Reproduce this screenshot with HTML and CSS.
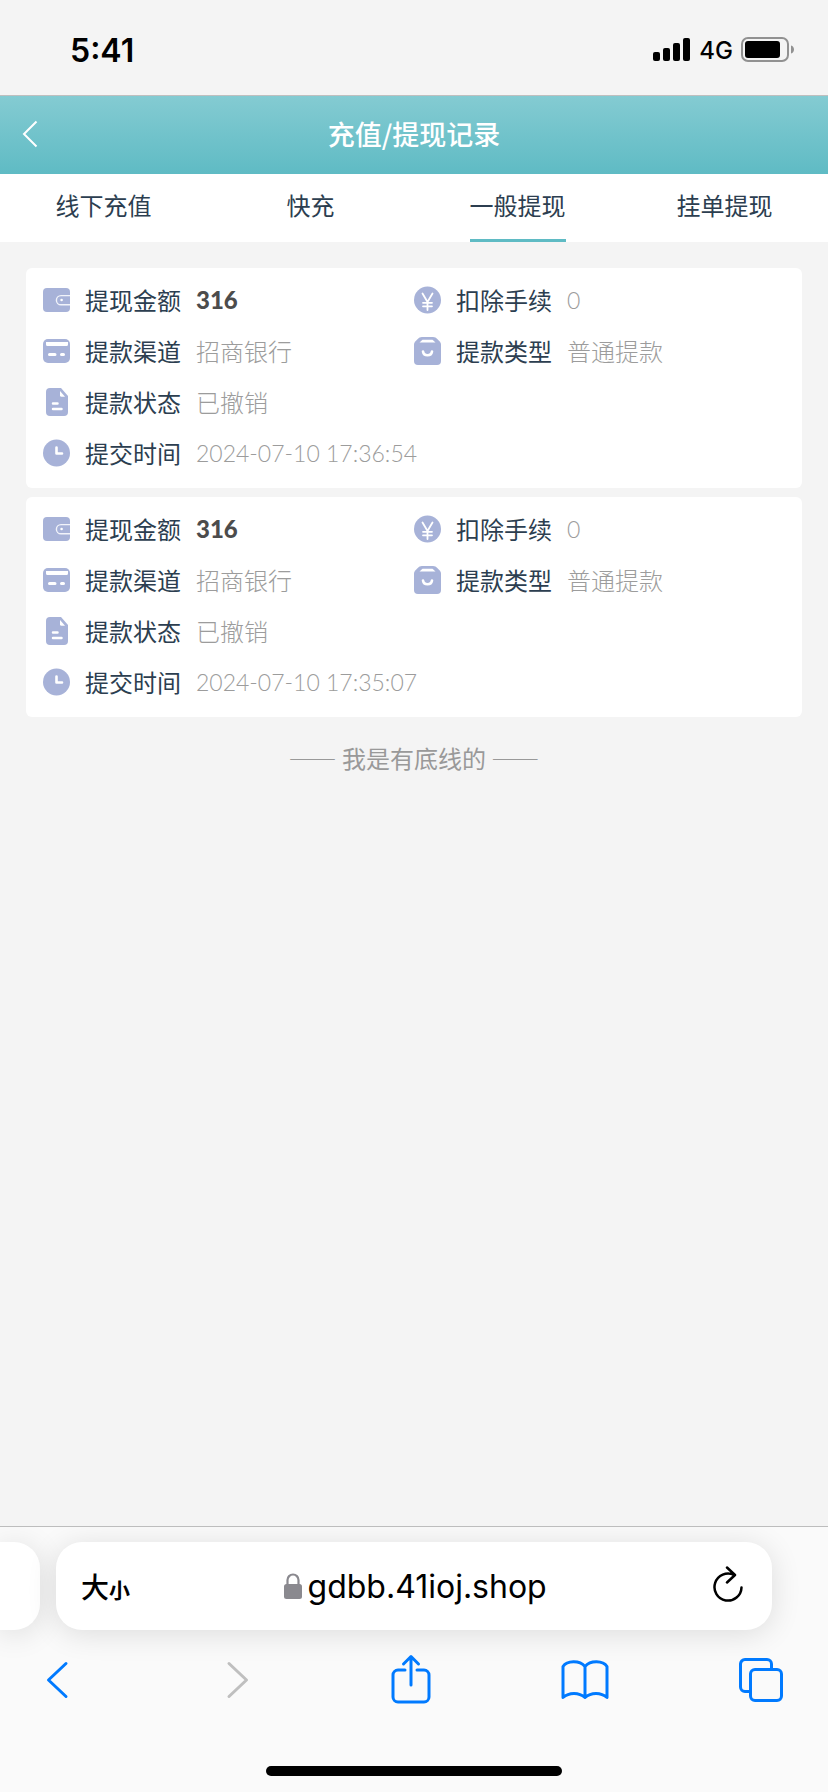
FILE: index.html
```html
<!DOCTYPE html>
<html lang="zh-CN">
<head>
    <meta charset="UTF-8">
    <meta name="viewport" content="width=device-width, initial-scale=1.0">
    <title>充值/提现记录</title>
    <link rel="stylesheet" href="styles.css">
</head>
<body>
    <!-- 图标 -->
    <svg class="icon-defs" aria-hidden="true">
        <symbol id="icon-wallet" viewBox="0 0 27 28">
            <path fill="#a7b2d8" d="M4 2h19a4 4 0 0 1 4 4v16a4 4 0 0 1-4 4H4a4 4 0 0 1-4-4V6a4 4 0 0 1 4-4z"/>
            <path fill="none" stroke="#f1f3fa" stroke-width="1.4" d="M27 9.600h-9a4.600 4.600 0 0 0 0 9.200h9"/>
            <circle cx="18.600" cy="14" r="1.300" fill="#fff"/>
        </symbol>
        <symbol id="icon-card" viewBox="0 0 27 28">
            <rect y="2" width="27" height="24" rx="5" fill="#a7b2d8"/>
            <path fill="#fff" d="M3 5h22v2.500a1.500 1.500 0 0 1-1.500 1.500h-19a1.500 1.500 0 0 1-1.500-1.500z"/>
            <path fill="none" stroke="#fff" stroke-width="3" stroke-linecap="round" d="M6.500 17.500h5.500M18.500 17.500h2"/>
        </symbol>
        <symbol id="icon-file" viewBox="0 0 27 28">
            <path fill="#a7b2d8" d="M7 0h11l7 8v16a4 4 0 0 1-4 4H7a4 4 0 0 1-4-4V4a4 4 0 0 1 4-4z"/>
            <path fill="#fff" d="M17 3l5 5.800h-3.500a1.500 1.500 0 0 1-1.500-1.500z"/>
            <path fill="none" stroke="#fff" stroke-width="2.500" stroke-linecap="round" d="M10 15.500h4.500M10 21h8.500"/>
        </symbol>
        <symbol id="icon-clock" viewBox="0 0 27 28">
            <circle cx="13.500" cy="14" r="13.500" fill="#a7b2d8"/>
            <path fill="none" stroke="#fff" stroke-width="2.600" stroke-linecap="round" stroke-linejoin="round" d="M13.500 8.500v6h5.500"/>
        </symbol>
        <symbol id="icon-yen" viewBox="0 0 27 28">
            <circle cx="13.500" cy="14" r="13.500" fill="#a7b2d8"/>
            <path fill="none" stroke="#fff" stroke-width="1.800" stroke-linecap="round" d="M8.500 7.500l5 8.500 5-8.500M13.500 16v8M9 16.800h9M9 20.300h9"/>
        </symbol>
        <symbol id="icon-bag" viewBox="0 0 27 28">
            <path fill="#a7b2d8" d="M8 0h11c2 0 3 .8 4.500 2.200l2 2C26.700 5.500 27 6.500 27 8v16a4 4 0 0 1-4 4H4a4 4 0 0 1-4-4V8c0-1.500.3-2.500 1.500-3.800l2-2C5 .8 6 0 8 0z"/>
            <path fill="#fff" d="M8.500 2.800h10l3 2.800H5.500z"/>
            <path fill="none" stroke="#fff" stroke-width="2.600" stroke-linecap="round" d="M9 14.500c.8 5 8.200 5 9 0"/>
        </symbol>
    </svg>

    <div class="status-bar">
        <span class="time">5:41</span>
        <div class="status-right">
            <svg width="38" height="24" viewBox="0 0 38 24" aria-hidden="true">
                <rect y="14" width="7" height="9" rx="2"/>
                <rect x="10" y="10" width="7" height="13" rx="2"/>
                <rect x="20" y="5" width="7" height="18" rx="2"/>
                <rect x="30" width="7" height="23" rx="2"/>
            </svg>
            <span class="network">4G</span>
            <svg width="54" height="26" viewBox="0 0 54 26" aria-hidden="true">
                <rect x="1" y="1" width="46" height="23" rx="6" fill="none" stroke="#919191" stroke-width="2"/>
                <rect x="4" y="4" width="35" height="17" rx="3"/>
                <path fill="#919191" d="M50 8.500c4 1 4 7 0 8z"/>
            </svg>
        </div>
    </div>

    <header class="header">
        <button class="header-back" type="button" aria-label="返回">
            <svg width="16" height="28" viewBox="0 0 16 28"><path fill="none" stroke="#fff" stroke-width="2" d="M14.500 1.500L2 14l12.500 12.500"/></svg>
        </button>
        <h1 class="title">充值/提现记录</h1>
    </header>

    <nav class="tabs">
        <a class="tab" href="#offline">线下充值</a>
        <a class="tab" href="#fast">快充</a>
        <a class="tab active" href="#normal">一般提现</a>
        <a class="tab" href="#order">挂单提现</a>
    </nav>

    <main class="list">
        <div class="record">
            <div class="item">
                <svg class="icon"><use href="#icon-wallet"/></svg>
                <span class="label">提现金额</span>
                <span class="value amount">316</span>
            </div>
            <div class="item">
                <svg class="icon"><use href="#icon-yen"/></svg>
                <span class="label">扣除手续</span>
                <span class="value number">0</span>
            </div>
            <div class="item">
                <svg class="icon"><use href="#icon-card"/></svg>
                <span class="label">提款渠道</span>
                <span class="value">招商银行</span>
            </div>
            <div class="item">
                <svg class="icon"><use href="#icon-bag"/></svg>
                <span class="label">提款类型</span>
                <span class="value">普通提款</span>
            </div>
            <div class="item full">
                <svg class="icon"><use href="#icon-file"/></svg>
                <span class="label">提款状态</span>
                <span class="value">已撤销</span>
            </div>
            <div class="item full">
                <svg class="icon"><use href="#icon-clock"/></svg>
                <span class="label">提交时间</span>
                <span class="value number">2024-07-10 17:36:54</span>
            </div>
        </div>
        <div class="record">
            <div class="item">
                <svg class="icon"><use href="#icon-wallet"/></svg>
                <span class="label">提现金额</span>
                <span class="value amount">316</span>
            </div>
            <div class="item">
                <svg class="icon"><use href="#icon-yen"/></svg>
                <span class="label">扣除手续</span>
                <span class="value number">0</span>
            </div>
            <div class="item">
                <svg class="icon"><use href="#icon-card"/></svg>
                <span class="label">提款渠道</span>
                <span class="value">招商银行</span>
            </div>
            <div class="item">
                <svg class="icon"><use href="#icon-bag"/></svg>
                <span class="label">提款类型</span>
                <span class="value">普通提款</span>
            </div>
            <div class="item full">
                <svg class="icon"><use href="#icon-file"/></svg>
                <span class="label">提款状态</span>
                <span class="value">已撤销</span>
            </div>
            <div class="item full">
                <svg class="icon"><use href="#icon-clock"/></svg>
                <span class="label">提交时间</span>
                <span class="value number">2024-07-10 17:35:07</span>
            </div>
        </div>
        <p class="no-more">—— 我是有底线的 ——</p>
    </main>

    <!-- 浏览器底部栏 -->
    <footer class="browser-bar">
        <div class="address-row">
            <div class="prev-page"></div>
            <div class="address">
                <button class="text-size" type="button">大<small>小</small></button>
                <div class="url">
                    <svg width="18" height="27" viewBox="0 0 18 27" aria-hidden="true">
                        <rect y="11" width="18" height="15" rx="2.500" fill="#8a898f"/>
                        <path fill="none" stroke="#8a898f" stroke-width="2.200" d="M3.500 12V7a5.500 5.500 0 0 1 11 0v5"/>
                    </svg>
                    <input class="url-input" type="text" value="gdbb.41ioj.shop" aria-label="网址">
                </div>
                <button class="reload" type="button" aria-label="刷新">
                    <svg width="32" height="42" viewBox="0 0 32 42">
                        <path fill="none" stroke="#000" stroke-width="2.500" stroke-linecap="round" stroke-linejoin="round" d="M29.500 22.500A13.500 13.500 0 1 1 22 10M15 2.500l8 7.500-8 7.500"/>
                    </svg>
                </button>
            </div>
        </div>
        <div class="toolbar">
            <button type="button" aria-label="后退">
                <svg width="48" height="52" viewBox="0 0 48 52"><path d="M32 9.500L14.500 26 32 42.500"/></svg>
            </button>
            <button type="button" aria-label="前进" disabled>
                <svg width="48" height="52" viewBox="0 0 48 52"><path d="M19 9.500L36.500 26 19 42.500"/></svg>
            </button>
            <button type="button" aria-label="分享">
                <svg width="48" height="52" viewBox="0 0 48 52"><path d="M19 16h-7a5 5 0 0 0-5 5v22a5 5 0 0 0 5 5h26a5 5 0 0 0 5-5V21a5 5 0 0 0-5-5h-7M25 31V3M17.500 10L25 2.500l7.500 7.500"/></svg>
            </button>
            <button type="button" aria-label="书签">
                <svg width="48" height="52" viewBox="0 0 48 52"><path d="M24 12.500C18.500 6 6 6.500 2 12.500v31c6-5.500 16-5.500 22 0 6-5.500 16-5.500 22 0v-31C42 6.500 29.500 6 24 12.500v31"/></svg>
            </button>
            <button type="button" aria-label="标签页">
                <svg width="48" height="52" viewBox="0 0 48 52"><rect x="13.500" y="15.500" width="31" height="31" rx="4.500"/><path d="M12 37.500H8A4.500 4.500 0 0 1 3.500 33V10A4.500 4.500 0 0 1 8 5.500h22a4.500 4.500 0 0 1 4.500 4.500v4"/></svg>
            </button>
        </div>
        <div class="home-indicator"></div>
    </footer>
</body>
</html>
```
FILE: styles.css
```css
* {
    box-sizing: border-box;
}
body {
    font-family: "Noto Sans CJK SC", sans-serif;
    font-size: 24px;
    margin: 0;
    min-height: 100vh;
    display: flex;
    flex-direction: column;
    background-color: #f4f4f4;
    color: #2c3e50;
}
button {
    border: none;
    background: none;
    padding: 0;
    color: inherit;
    font-family: inherit;
    cursor: pointer;
}
svg {
    display: block;
    flex-shrink: 0;
}
.icon-defs {
    display: none;
}
/* 状态栏 */
.status-bar {
    height: 96px;
    padding: 5px 33px 0 70px;
    display: flex;
    justify-content: space-between;
    align-items: center;
    border-bottom: 1px solid #bfbfbf;
    font-family: Inter, sans-serif;
    color: #000;
}
.time {
    font-size: 32px;
    font-weight: 600;
}
.status-right {
    display: flex;
    align-items: center;
    gap: 8px;
}
.network {
    font-weight: 500;
}
/* 标题 */
.header {
    height: 78px;
    padding: 0 22px 2px;
    display: grid;
    grid-template-columns: 1fr auto 1fr;
    align-items: center;
    background: linear-gradient(#84cbd2, #5fbbc4);
    color: #fff;
}
.header-back {
    justify-self: start;
}
.title {
    margin: 0;
    font-size: 27px;
    line-height: 40px;
    font-weight: 500;
}
/* 选项卡 */
.tabs {
    display: grid;
    grid-template-columns: repeat(4, 1fr);
    justify-items: center;
    background-color: #fff;
}
.tab {
    height: 68px;
    line-height: 62px;
    color: inherit;
    text-decoration: none;
    border-bottom: 3px solid transparent;
}
.tab.active {
    border-bottom-color: #5fbbc4;
}
/* 记录列表 */
.list {
    padding: 26px;
    display: flex;
    flex-direction: column;
    gap: 9px;
}
.record {
    padding: 6px 17px 10px;
    display: grid;
    grid-template-columns: 1fr 1fr;
    background-color: #fff;
    border-radius: 6px;
}
.item {
    height: 51px;
    display: flex;
    align-items: center;
}
.item.full {
    grid-column: 1 / -1;
}
.icon {
    width: 27px;
    height: 28px;
    margin-right: 15px;
}
.label {
    margin-right: 15px;
}
.value {
    color: #9c9c9c;
    font-weight: 300;
}
.number {
    font-family: Lato, sans-serif;
    font-size: 23px;
}
.amount {
    font-family: Lato, sans-serif;
    font-weight: 900;
    color: #4c4c4c;
}
.no-more {
    margin: 14px 0 0;
    line-height: 36px;
    text-align: center;
    color: #999;
}
/* 浏览器底部栏 */
.browser-bar {
    margin-top: auto;
    padding: 15px 0 16px;
    border-top: 1px solid #bdbdbd;
    background-color: #fafafa;
    overflow: hidden;
}
.address-row {
    padding-right: 56px;
    display: flex;
    gap: 16px;
}
.prev-page,
.address {
    height: 88px;
    background-color: #fff;
    box-shadow: 0 4px 30px rgba(0, 0, 0, 0.12);
}
.prev-page {
    width: 40px;
    border-radius: 0 26px 26px 0;
}
.address {
    flex: 1;
    padding: 0 28px 0 25px;
    display: grid;
    grid-template-columns: 1fr auto 1fr;
    align-items: center;
    border-radius: 26px;
    color: #000;
}
.text-size {
    justify-self: start;
    font-size: 28px;
    font-weight: 500;
}
.text-size small {
    font-size: 21px;
    font-weight: 700;
}
.url {
    padding-left: 8px;
    display: flex;
    align-items: center;
    gap: 6px;
}
.url-input {
    width: 242px;
    padding: 0;
    border: none;
    outline: none;
    background: none;
    font-family: Inter, sans-serif;
    font-size: 32px;
    color: #000;
}
.reload {
    justify-self: end;
}
.toolbar {
    padding: 24px 43px 0 34px;
    display: flex;
    justify-content: space-between;
}
.toolbar button {
    color: #007aff;
}
.toolbar button:disabled {
    color: #bfbfbf;
}
.toolbar svg {
    fill: none;
    stroke: currentColor;
    stroke-width: 3;
    stroke-linecap: round;
    stroke-linejoin: round;
}
.home-indicator {
    width: 296px;
    height: 10px;
    margin: 60px auto 0;
    border-radius: 5px;
    background-color: #000;
}
```
